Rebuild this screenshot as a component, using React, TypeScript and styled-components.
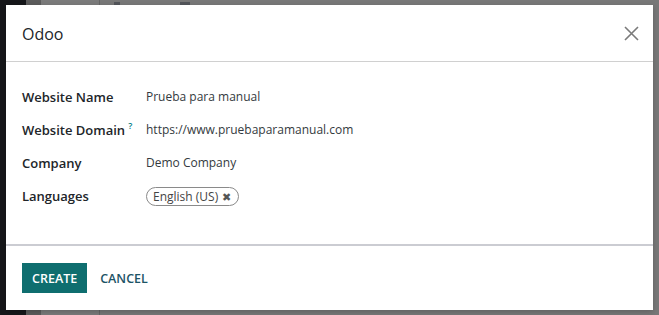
import React from 'react';
import styled, { createGlobalStyle } from 'styled-components';

const GlobalStyle = createGlobalStyle`
  html, body {
    margin: 0;
    padding: 0;
    width: 659px;
    height: 315px;
    overflow: hidden;
    font-family: 'Open Sans', 'Noto Sans', sans-serif;
  }
`;

const Backdrop = styled.div`
  position: relative;
  width: 659px;
  height: 315px;
  background: linear-gradient(
    to right,
    #16171a 0,
    #16171a 26px,
    #5c5c5c 26px,
    #5c5c5c 41px,
    #7b7b7b 41px,
    #7b7b7b 99px,
    #666 99px,
    #666 100px,
    #787878 100px
  );
  padding: 5px 6px 0 6px;
  box-sizing: border-box;
`;

// bits of the page behind the dialog peeking out at the top
const Peek = styled.div<{ $left: number; $width: number }>`
  position: absolute;
  top: 2px;
  left: ${(p) => p.$left}px;
  width: ${(p) => p.$width}px;
  height: 3px;
  background: #3a3f48;
  opacity: 0.6;
`;

const Dialog = styled.div`
  position: relative;
  width: 647px;
  height: 305px;
  background: #fff;
  display: flex;
  flex-direction: column;
  box-shadow: 0 2px 6px rgba(0, 0, 0, 0.2);
`;

const Header = styled.div`
  height: 56px;
  display: flex;
  align-items: center;
  justify-content: space-between;
  padding: 0 12px 0 16px;
  border-bottom: 1px solid #d0d0d0;
`;

const Title = styled.h4`
  margin: 0;
  font-size: 16px;
  font-weight: 400;
  color: #212529;
  padding-top: 1px;
`;

const CloseButton = styled.button`
  border: 0;
  background: none;
  padding: 0;
  width: 20px;
  height: 20px;
  display: flex;
  align-items: center;
  justify-content: center;
  cursor: pointer;
`;

const Body = styled.div`
  flex: 1;
  padding: 26px 16px 0 16px;
  display: grid;
  grid-template-columns: 124px 1fr;
  grid-auto-rows: 33px;
  align-items: start;
  border-bottom: 2px solid #cbccd2;
`;

const Label = styled.div`
  font-size: 13px;
  font-weight: 600;
  color: #212529;
  line-height: 18px;
`;

const Help = styled.sup`
  color: #017e84;
  font-size: 9px;
  line-height: 0;
  margin-left: 3px;
  font-weight: 600;
  vertical-align: 6px;
`;

const Value = styled.div`
  font-size: 12px;
  color: #343a40;
  line-height: 18px;
`;

const Tag = styled.span`
  display: inline-flex;
  align-items: center;
  gap: 4px;
  border: 1px solid #8a8a8a;
  border-radius: 10px;
  padding: 0 7px 0 6px;
  height: 17px;
  font-size: 12px;
  color: #444;
`;

const TagRemove = styled.span`
  font-size: 11px;
  color: #555;
  line-height: 1;
`;

const Footer = styled.div`
  height: 64px;
  display: flex;
  align-items: center;
  gap: 3px;
  padding: 0 16px;
  box-sizing: border-box;
`;

const Button = styled.button<{ $primary?: boolean }>`
  height: 30px;
  padding: 0 10px;
  border: 0;
  font-family: inherit;
  font-size: 12.5px;
  font-weight: 600;
  text-transform: uppercase;
  background: ${(p) => (p.$primary ? '#0f6e6f' : 'transparent')};
  color: ${(p) => (p.$primary ? '#fff' : '#1d5466')};
  cursor: pointer;
`;

const App = () => (
  <>
    <GlobalStyle />
    <Backdrop>
      <Peek $left={114} $width={6} />
      <Peek $left={180} $width={10} />
      <Dialog>
        <Header>
          <Title>Odoo</Title>
          <CloseButton aria-label="Close">
            <svg width="15" height="15" viewBox="0 0 15 15">
              <path d="M1 1 L14 14 M14 1 L1 14" stroke="#7a7a7a" strokeWidth="1.6" />
            </svg>
          </CloseButton>
        </Header>
        <Body>
          <Label>Website Name</Label>
          <Value>Prueba para manual</Value>
          <Label>
            Website Domain<Help>?</Help>
          </Label>
          <Value>https://www.pruebaparamanual.com</Value>
          <Label>Company</Label>
          <Value>Demo Company</Value>
          <Label>Languages</Label>
          <Value>
            <Tag>
              English (US)
              <TagRemove>✖</TagRemove>
            </Tag>
          </Value>
        </Body>
        <Footer>
          <Button $primary>Create</Button>
          <Button>Cancel</Button>
        </Footer>
      </Dialog>
    </Backdrop>
  </>
);

export default App;
